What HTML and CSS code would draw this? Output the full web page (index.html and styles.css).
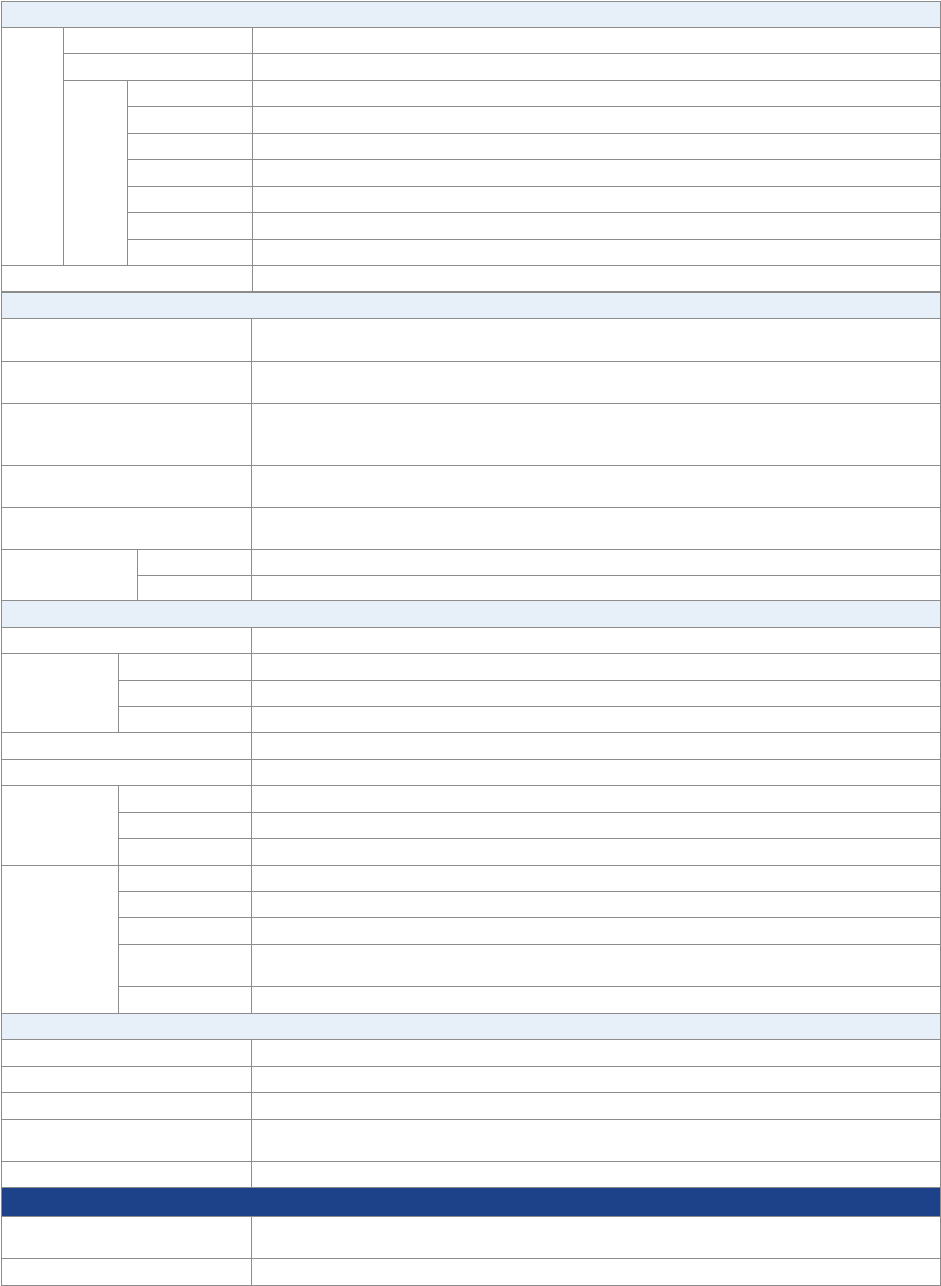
FILE: index.html
```
<!doctype html>
<html lang="en">
<head>
	<meta charset="UTF-8">
	<title>Specifications</title>
	<link rel="stylesheet" href="styles.css">
</head>
<body>
	<table class="spec first">
		<colgroup>
			<col class="c63"><col class="c64"><col class="c125"><col>
		</colgroup>
		<tr class="p26"><td class="hd" colspan="4"></td></tr>
		<tr class="p26"><td rowspan="9"></td><td colspan="2"></td><td></td></tr>
		<tr class="p27"><td colspan="2"></td><td></td></tr>
		<tr class="p26"><td rowspan="7"></td><td></td><td></td></tr>
		<tr class="p27"><td></td><td></td></tr>
		<tr class="p26"><td></td><td></td></tr>
		<tr class="p27"><td></td><td></td></tr>
		<tr class="p26"><td></td><td></td></tr>
		<tr class="p27"><td></td><td></td></tr>
		<tr class="p26"><td></td><td></td></tr>
		<tr class="p26"><td colspan="3"></td><td></td></tr>
	</table>

	<table class="spec">
		<colgroup>
			<col class="c117"><col class="c19"><col class="c114"><col>
		</colgroup>
		<!-- section 2 -->
		<tr class="p26"><td class="hd" colspan="4"></td></tr>
		<tr class="p43"><td colspan="3"></td><td></td></tr>
		<tr class="p42"><td colspan="3"></td><td></td></tr>
		<tr class="p62"><td colspan="3"></td><td></td></tr>
		<tr class="p42"><td colspan="3"></td><td></td></tr>
		<tr class="p42"><td colspan="3"></td><td></td></tr>
		<tr class="p26"><td colspan="2" rowspan="2"></td><td></td><td></td></tr>
		<tr class="p25"><td></td><td></td></tr>
		<!-- section 3 -->
		<tr class="p27"><td class="hd" colspan="4"></td></tr>
		<tr class="p26"><td colspan="3"></td><td></td></tr>
		<tr class="p27"><td rowspan="3"></td><td colspan="2"></td><td></td></tr>
		<tr class="p26"><td colspan="2"></td><td></td></tr>
		<tr class="p26"><td colspan="2"></td><td></td></tr>
		<tr class="p27"><td colspan="3"></td><td></td></tr>
		<tr class="p26"><td colspan="3"></td><td></td></tr>
		<tr class="p27"><td rowspan="3"></td><td colspan="2"></td><td></td></tr>
		<tr class="p26"><td colspan="2"></td><td></td></tr>
		<tr class="p27"><td colspan="2"></td><td></td></tr>
		<tr class="p26"><td rowspan="5"></td><td colspan="2"></td><td></td></tr>
		<tr class="p26"><td colspan="2"></td><td></td></tr>
		<tr class="p27"><td colspan="2"></td><td></td></tr>
		<tr class="p42"><td colspan="2"></td><td></td></tr>
		<tr class="p27"><td colspan="2"></td><td></td></tr>
		<!-- section 4 -->
		<tr class="p26"><td class="hd" colspan="4"></td></tr>
		<tr class="p27"><td colspan="3"></td><td></td></tr>
		<tr class="p26"><td colspan="3"></td><td></td></tr>
		<tr class="p27"><td colspan="3"></td><td></td></tr>
		<tr class="p42"><td colspan="3"></td><td></td></tr>
		<tr class="p26"><td colspan="3"></td><td></td></tr>
		<!-- section 5 -->
		<tr class="p29"><td class="hd dark" colspan="4"></td></tr>
		<tr class="p42"><td colspan="3"></td><td></td></tr>
		<tr class="p27"><td colspan="3"></td><td></td></tr>
	</table>
</body>
</html>
```

FILE: styles.css
```
body{
	margin: 0;
	background: #fff;
	font-family: "Liberation Sans", Arial, sans-serif;
	font-size: 12px;
	color: #333;
}
.spec{
	width: 940px;
	margin-left: 1px;
	table-layout: fixed;
	border-collapse: separate;
	border-spacing: 0;
	border-left: 1px solid #8c8c8c;
	border-bottom: none;
}
.spec.first{
	margin-top: 1px;
	border-top: 1px solid #8c8c8c;
}
.spec td{
	padding: 0;
	border-right: 1px solid #8c8c8c;
	border-bottom: 1px solid #8c8c8c;
}
.spec + .spec{
	border-top: 1px solid #8c8c8c;
}
.spec .hd{
	background: #e7eff8;
}
.spec .hd.dark{
	background: #1e428a;
}
.c63{ width: 62px; }
.c64{ width: 64px; }
.c125{ width: 125px; }
.c117{ width: 117px; }
.c19{ width: 19px; }
.c114{ width: 114px; }

.p25{ height: 25px; }
.p26{ height: 26px; }
.p27{ height: 27px; }
.p29{ height: 29px; }
.p42{ height: 42px; }
.p43{ height: 43px; }
.p62{ height: 62px; }
```
